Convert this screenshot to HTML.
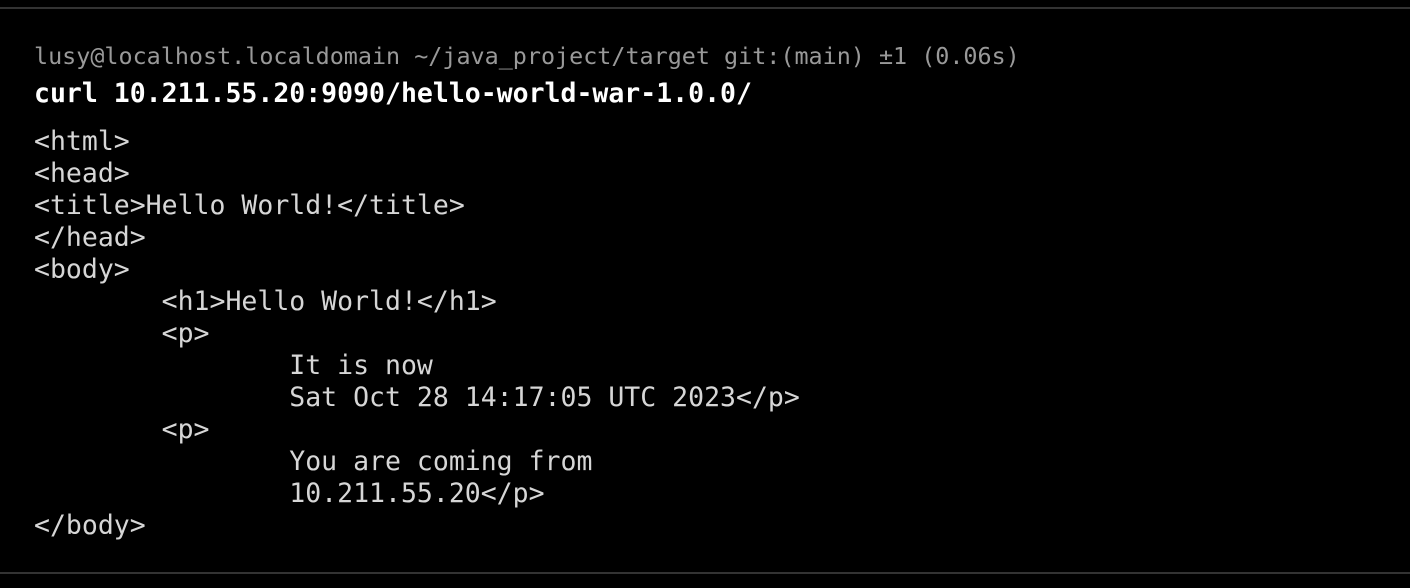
<!DOCTYPE html>
<html><head><style>
html,body{margin:0;padding:0;background:#000;width:1410px;height:588px;overflow:hidden}
.t{position:absolute;left:34px;font-family:"DejaVu Sans Mono","Liberation Mono",monospace;font-size:26.5px;line-height:32px;white-space:pre;color:#d6d6d6}
.hl{position:absolute;left:0;width:1410px;height:2px;background:#333}
</style></head><body>
<div class="hl" style="top:7px"></div>
<div class="hl" style="top:572px"></div>
<div class="t" style="top:40px;color:#999;font-size:23.4px">lusy@localhost.localdomain ~/java_project/target git:(main) ±1 (0.06s)</div>
<div class="t" style="top:78px;color:#fff;font-weight:bold">curl 10.211.55.20:9090/hello-world-war-1.0.0/</div>
<div class="t" style="top:126px">&lt;html&gt;
&lt;head&gt;
&lt;title&gt;Hello World!&lt;/title&gt;
&lt;/head&gt;
&lt;body&gt;
        &lt;h1&gt;Hello World!&lt;/h1&gt;
        &lt;p&gt;
                It is now
                Sat Oct 28 14:17:05 UTC 2023&lt;/p&gt;
        &lt;p&gt;
                You are coming from
                10.211.55.20&lt;/p&gt;
&lt;/body&gt;</div>
</body></html>
